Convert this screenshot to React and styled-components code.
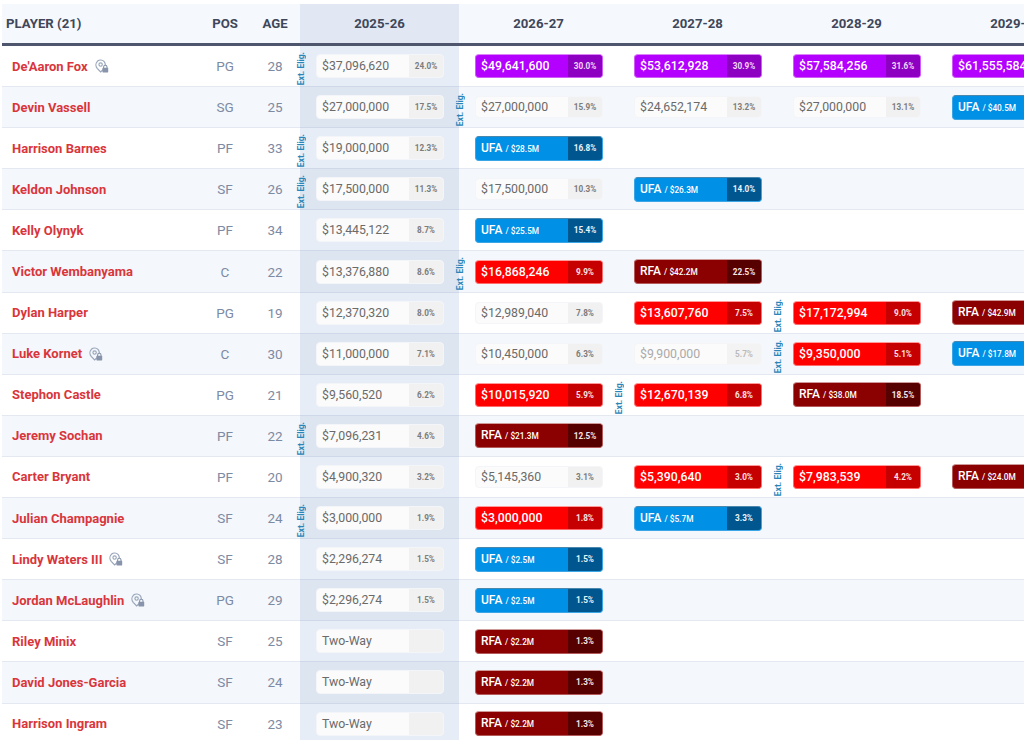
import React from "react";
import styled, { createGlobalStyle, css } from "styled-components";

const YEARS = ["2025-26", "2026-27", "2027-28", "2028-29", "2029-30"];

// s: plain salary, o: player option (purple), t: team option (red)
// f: faded, u: UFA, r: RFA. ext puts the Ext. Elig. marker on the cell
const s = (amount, pct, ext) => ({ kind: "plain", amount, pct, ext });
const f = (amount, pct, ext) => ({ kind: "faded", amount, pct, ext });
const o = (amount, pct, ext) => ({ kind: "purple", amount, pct, ext });
const t = (amount, pct, ext) => ({ kind: "red", amount, pct, ext });
const u = (label, pct, ext) => ({ kind: "ufa", tag: "UFA", label, pct, ext });
const r = (label, pct, ext) => ({ kind: "rfa", tag: "RFA", label, pct, ext });
const w = () => ({ kind: "plain", amount: "Two-Way", pct: "" });

const PLAYERS = [
  { name: "De'Aaron Fox", lock: true, pos: "PG", age: 28, cells: [s("$37,096,620", "24.0%", true), o("$49,641,600", "30.0%"), o("$53,612,928", "30.9%"), o("$57,584,256", "31.6%"), o("$61,555,584", "32.4%")] },
  { name: "Devin Vassell", pos: "SG", age: 25, cells: [s("$27,000,000", "17.5%"), s("$27,000,000", "15.9%", true), s("$24,652,174", "13.2%"), s("$27,000,000", "13.1%"), u("$40.5M", "18.2%")] },
  { name: "Harrison Barnes", pos: "PF", age: 33, cells: [s("$19,000,000", "12.3%", true), u("$28.5M", "16.8%")] },
  { name: "Keldon Johnson", pos: "SF", age: 26, cells: [s("$17,500,000", "11.3%", true), s("$17,500,000", "10.3%"), u("$26.3M", "14.0%")] },
  { name: "Kelly Olynyk", pos: "PF", age: 34, cells: [s("$13,445,122", "8.7%"), u("$25.5M", "15.4%")] },
  { name: "Victor Wembanyama", pos: "C", age: 22, cells: [s("$13,376,880", "8.6%"), t("$16,868,246", "9.9%", true), r("$42.2M", "22.5%")] },
  { name: "Dylan Harper", pos: "PG", age: 19, cells: [s("$12,370,320", "8.0%"), s("$12,989,040", "7.8%"), t("$13,607,760", "7.5%"), t("$17,172,994", "9.0%", true), r("$42.9M", "22.5%")] },
  { name: "Luke Kornet", lock: true, pos: "C", age: 30, cells: [s("$11,000,000", "7.1%"), s("$10,450,000", "6.3%"), f("$9,900,000", "5.7%"), t("$9,350,000", "5.1%", true), u("$17.8M", "8.0%")] },
  { name: "Stephon Castle", pos: "PG", age: 21, cells: [s("$9,560,520", "6.2%"), t("$10,015,920", "5.9%"), t("$12,670,139", "6.8%", true), r("$38.0M", "18.5%")] },
  { name: "Jeremy Sochan", pos: "PF", age: 22, cells: [s("$7,096,231", "4.6%", true), r("$21.3M", "12.5%")] },
  { name: "Carter Bryant", pos: "PF", age: 20, cells: [s("$4,900,320", "3.2%"), s("$5,145,360", "3.1%"), t("$5,390,640", "3.0%"), t("$7,983,539", "4.2%", true), r("$24.0M", "10.8%")] },
  { name: "Julian Champagnie", pos: "SF", age: 24, cells: [s("$3,000,000", "1.9%", true), t("$3,000,000", "1.8%"), u("$5.7M", "3.3%")] },
  { name: "Lindy Waters III", lock: true, pos: "SF", age: 28, cells: [s("$2,296,274", "1.5%"), u("$2.5M", "1.5%")] },
  { name: "Jordan McLaughlin", lock: true, pos: "PG", age: 29, cells: [s("$2,296,274", "1.5%"), u("$2.5M", "1.5%")] },
  { name: "Riley Minix", pos: "SF", age: 25, cells: [w(), r("$2.2M", "1.3%")] },
  { name: "David Jones-Garcia", pos: "SF", age: 24, cells: [w(), r("$2.2M", "1.3%")] },
  { name: "Harrison Ingram", pos: "SF", age: 23, cells: [w(), r("$2.2M", "1.3%")] },
];

const KINDS = {
  plain: { bg: "#fbfbfb", side: "#f1f1f1", edge: "#f4f5f8", top: "#f4f5f8", text: "#6a6a6a", pctText: "#7c7c7c" },
  faded: { bg: "#fbfbfb", side: "#f3f3f3", edge: "#f5f5f7", top: "#f5f5f7", text: "#aaa", pctText: "#bbb" },
  purple: { bg: "#b400ff", side: "#8d00c2", edge: "#cf5cf5", top: "#dc85f8", text: "#fff", pctText: "#f0d8fa" },
  red: { bg: "#ff0000", side: "#c60000", edge: "#ff6b6b", top: "#ff9a9a", text: "#fff", pctText: "#fbe2e2" },
  ufa: { bg: "#0090e6", side: "#00568f", edge: "#3aa6e6", top: "#4a87ad", text: "#fff", pctText: "#eaf4fb" },
  rfa: { bg: "#8b0000", side: "#560000", edge: "#b55a5a", top: "#cf9a9a", text: "#fff", pctText: "#f6e6e6" },
};

const GlobalStyle = createGlobalStyle`
  html, body {
    margin: 0;
    height: 740px;
    overflow: hidden;
    background: #fff;
    font-family: Roboto, "Liberation Sans", sans-serif;
  }
`;

const Table = styled.div`
  width: 1093px;
  margin: 4px 0 0 2px;
`;

const Row = styled.div`
  display: grid;
  grid-template-columns: 198px 50px 50px repeat(5, 159px);
  height: 41.1px;
  box-sizing: border-box;
  border-bottom: 1px solid #e4e9f1;
  background: ${(p) => (p.$alt ? "#f4f7fb" : "#fff")};
`;

const HeadRow = styled(Row)`
  height: 42px;
  background: #f5f8fc;
  border-bottom: 3px solid #4d566c;
`;

const HeadCell = styled.div`
  display: flex;
  align-items: center;
  justify-content: ${(p) => (p.$left ? "flex-start" : "center")};
  padding-left: ${(p) => (p.$left ? "4px" : "0")};
  font-size: 13.2px;
  font-weight: 700;
  color: #3f475a;
  background: ${(p) => (p.$current ? "#e1e8f3" : "transparent")};
`;

const PlayerCell = styled.div`
  display: flex;
  align-items: center;
  gap: 7px;
  padding-left: 10px;
`;

const PlayerName = styled.span`
  font-size: 13px;
  font-weight: 700;
  color: #d9363c;
`;

const InfoCell = styled.div`
  display: flex;
  align-items: center;
  justify-content: center;
  font-size: 13.5px;
  color: #7d8aa3;
`;

const YearCell = styled.div`
  position: relative;
  display: flex;
  align-items: center;
  padding-left: 16px;
  ${(p) =>
    p.$current &&
    css`
      background: ${p.$alt ? "#dde5f1" : "#e6edf7"};
      box-shadow: 0 1px 0 #cfd8e8;
    `}
`;

const ExtMark = styled.span`
  position: absolute;
  left: -4px;
  top: 6px;
  writing-mode: vertical-rl;
  transform: rotate(180deg);
  font-size: 8.5px;
  font-weight: 700;
  line-height: 10px;
  white-space: nowrap;
  color: #2a86b8;
`;

const Chip = styled.div`
  display: flex;
  width: 128px;
  height: ${(p) => (p.$tall ? "25px" : p.$low ? "22px" : "24px")};
  box-sizing: border-box;
  border-radius: 4px;
  overflow: hidden;
  ${(p) => {
    const k = KINDS[p.$kind];
    return css`
      background: ${k.bg};
      color: ${k.text};
      border: 1px solid ${k.edge};
      border-top-color: ${k.top};
    `;
  }}
`;

const ChipMain = styled.div`
  flex: 1;
  display: flex;
  align-items: center;
  gap: 3px;
  padding-left: 5px;
  font-size: 12.3px;
  font-weight: ${(p) => (p.$bright ? 500 : 400)};
  white-space: nowrap;
`;

const ChipTag = styled.span`
  font-size: 12px;
  font-weight: 500;
  margin-top: -1px;
`;

const ChipLabel = styled.span`
  font-size: 8.3px;
  font-weight: 500;
  margin-top: 1px;
`;

const ChipPct = styled.div`
  flex: none;
  width: 34px;
  display: flex;
  align-items: center;
  justify-content: center;
  font-size: 8.2px;
  font-weight: 700;
  ${(p) => {
    const k = KINDS[p.$kind];
    return css`
      background: ${k.side};
      color: ${k.pctText};
    `;
  }}
`;

function PinLock() {
  return (
    <svg width="14" height="14" viewBox="0 0 14 14" fill="none" aria-hidden="true">
      <path
        d="M8.6 10.2 5.6 13 2.2 9.3C.4 7.2.6 4.1 2.4 2.3 4.3.5 7.3.6 9 2.4c1 1.1 1.4 2.4 1.2 3.7"
        stroke="#98a5ba"
        strokeWidth="1.2"
      />
      <circle cx="5.6" cy="5.6" r="1.7" stroke="#98a5ba" strokeWidth="1.1" />
      <path d="M8.6 9V8a1.7 1.7 0 0 1 3.4 0v1" stroke="#8794ab" strokeWidth="1.1" />
      <rect x="7.4" y="8.8" width="5.8" height="4.6" rx=".6" fill="#8794ab" />
    </svg>
  );
}

function SalaryChip({ cell, first }) {
  const tall = cell.kind === "ufa" || cell.kind === "rfa";
  const low = !first && (cell.kind === "plain" || cell.kind === "faded");
  const bright = cell.kind === "purple" || cell.kind === "red";
  return (
    <Chip $kind={cell.kind} $tall={tall} $low={low}>
      <ChipMain $bright={bright}>
        {cell.tag ? (
          <>
            <ChipTag>{cell.tag}</ChipTag>
            <ChipLabel>/ {cell.label}</ChipLabel>
          </>
        ) : (
          cell.amount
        )}
      </ChipMain>
      <ChipPct $kind={cell.kind}>{cell.pct}</ChipPct>
    </Chip>
  );
}

export default function App() {
  return (
    <>
      <GlobalStyle />
      <Table>
        <HeadRow>
          <HeadCell $left>PLAYER (21)</HeadCell>
          <HeadCell>POS</HeadCell>
          <HeadCell>AGE</HeadCell>
          {YEARS.map((year, i) => (
            <HeadCell key={year} $current={i === 0}>
              {year}
            </HeadCell>
          ))}
        </HeadRow>
        {PLAYERS.map((player, rowIndex) => {
          const alt = rowIndex % 2 === 1;
          return (
            <Row key={player.name} $alt={alt}>
              <PlayerCell>
                <PlayerName>{player.name}</PlayerName>
                {player.lock && <PinLock />}
              </PlayerCell>
              <InfoCell>{player.pos}</InfoCell>
              <InfoCell>{player.age}</InfoCell>
              {YEARS.map((year, i) => {
                const cell = player.cells[i];
                return (
                  <YearCell key={year} $current={i === 0} $alt={alt}>
                    {cell && cell.ext && <ExtMark>Ext. Elig.</ExtMark>}
                    {cell && <SalaryChip cell={cell} first={i === 0} />}
                  </YearCell>
                );
              })}
            </Row>
          );
        })}
      </Table>
    </>
  );
}
